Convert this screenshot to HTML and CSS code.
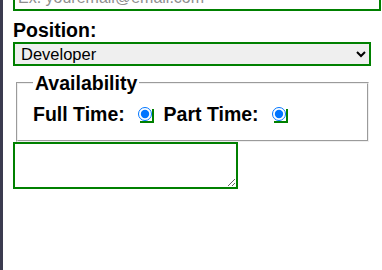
FILE: index.html
```html
<!DOCTYPE html>
<html lang="en">
<head>
<meta charset="UTF-8">
<meta name="viewport" content="width=device-width, initial-scale=1.0">
<title>Job Application</title>
<link rel="stylesheet" href="styles.css">
</head>

<body>
    <form class="app-form">
        <input class="field" type="email" id="email" name="email" placeholder="Ex: youremail@email.com">

        <label class="field-label" for="position">Position:</label>
        <select class="field-select" id="position" name="position">
            <option value="developer">Developer</option>
            <option value="designer">Designer</option>
            <option value="manager">Manager</option>
        </select>

        <fieldset class="availability">
            <legend>Availability</legend>
            <label for="full-time">Full Time:</label>
            <input class="radio" type="radio" id="full-time" name="full-time" checked>
            <label for="part-time">Part Time:</label>
            <input class="radio" type="radio" id="part-time" name="part-time" checked>
        </fieldset>

        <textarea class="message" id="message" name="message"></textarea>
    </form>
</body>
</html>
```

FILE: styles.css
```css
body {
    margin: 0;
    padding: 0;
    border-left: 3px solid #3b3b4f;
    min-height: 270px;
    box-sizing: border-box;
    font-family: "Liberation Sans", Arial, sans-serif;
    background-color: white;
}
.app-form {
    width: 358px;
    padding-left: 10px;
}
.field {
    display: block;
    width: 100%;
    margin: -15px 0 0 0;
    padding: 2px 3px;
    border: 2px solid green;
    font-family: "Liberation Sans", Arial, sans-serif;
    font-size: 16px;
    line-height: 18px;
}
.field::placeholder {
    color: #8e8e8e;
}
.field-label {
    display: block;
    margin-top: 8px;
    font-size: 19.5px;
    font-weight: bold;
    line-height: 22px;
}
.field-select {
    display: block;
    box-sizing: border-box;
    width: 100%;
    height: 24px;
    margin-top: 1px;
    padding: 0 2px;
    border: 2px solid green;
    background-color: #efefef;
    font-family: "Liberation Sans", Arial, sans-serif;
    font-size: 16.5px;
    color: black;
}
.availability {
    margin: 6px 2px 0 3px;
    padding: 9px 14px 15px 15px;
    font-size: 19.5px;
    font-weight: bold;
    line-height: 22px;
}
.availability legend {
    padding: 0 2px;
}
.radio {
    width: 14px;
    height: 14px;
    margin: 3px 6px 0 8px;
    box-shadow: 2px 2px 0 green;
}
.message {
    display: block;
    box-sizing: border-box;
    width: 225px;
    height: 47px;
    margin-top: 0;
    border: 2px solid green;
}
```
